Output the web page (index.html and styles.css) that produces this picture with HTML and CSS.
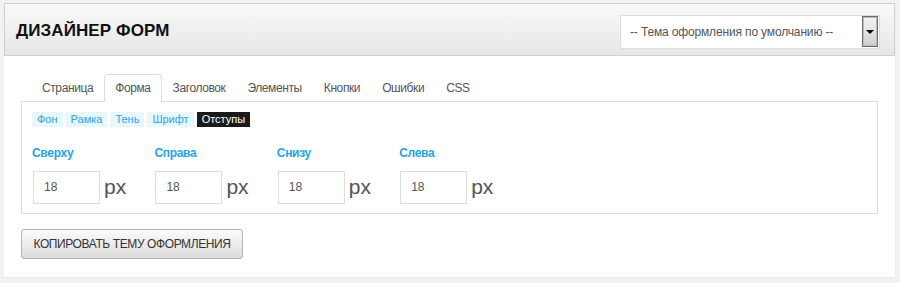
FILE: index.html
```html
<!DOCTYPE html>
<html lang="ru">
<head>
<meta charset="utf-8">
<title>Дизайнер форм</title>
<link rel="stylesheet" href="styles.css">
</head>
<body>
<div class="card">
  <div class="header">
    <h1 class="title">ДИЗАЙНЕР ФОРМ</h1>
    <div class="select">
      <span class="select-text">-- Тема оформления по умолчанию --</span>
      <span class="select-btn"><span class="arrow"></span></span>
    </div>
  </div>
  <div class="body">
    <ul class="tabs">
      <li class="tab">Страница</li>
      <li class="tab active">Форма</li>
      <li class="tab">Заголовок</li>
      <li class="tab">Элементы</li>
      <li class="tab">Кнопки</li>
      <li class="tab">Ошибки</li>
      <li class="tab">CSS</li>
    </ul>
    <div class="panel">
      <div class="subtabs">
        <span class="subtab">Фон</span>
        <span class="subtab">Рамка</span>
        <span class="subtab">Тень</span>
        <span class="subtab">Шрифт</span>
        <span class="subtab current">Отступы</span>
      </div>
      <div class="fields">
        <div class="field">
          <div class="label">Сверху</div>
          <div class="row"><span class="input">18</span><span class="unit">px</span></div>
        </div>
        <div class="field">
          <div class="label">Справа</div>
          <div class="row"><span class="input">18</span><span class="unit">px</span></div>
        </div>
        <div class="field">
          <div class="label">Снизу</div>
          <div class="row"><span class="input">18</span><span class="unit">px</span></div>
        </div>
        <div class="field">
          <div class="label">Слева</div>
          <div class="row"><span class="input">18</span><span class="unit">px</span></div>
        </div>
      </div>
    </div>
    <button class="btn">КОПИРОВАТЬ ТЕМУ ОФОРМЛЕНИЯ</button>
  </div>
</div>
</body>
</html>
```
FILE: styles.css
```css
html, body {
  margin: 0;
  padding: 0;
}
body {
  background: #f2f2f2;
  font-family: "Liberation Sans", Arial, sans-serif;
  padding: 3px 5px 7px 4px;
}
.card {
  background: #fff;
  box-shadow: 0 1px 2px rgba(0,0,0,0.04);
}
.header {
  height: 51px;
  border: 1px solid #cfcfcf;
  background: linear-gradient(#f9f9f9, #e6e6e6);
  display: flex;
  align-items: center;
  justify-content: space-between;
  padding: 0 14px 0 11px;
}
.title {
  margin: 0;
  font-size: 17px;
  font-weight: bold;
  color: #111;
  letter-spacing: 0.1px;
  position: relative;
  top: 1px;
}
.select {
  width: 258px;
  height: 32px;
  border: 1px solid #dcdcdc;
  background: #fff;
  display: flex;
  align-items: center;
  justify-content: space-between;
  margin-top: 4px;
}
.select-text {
  font-size: 12px;
  color: #555;
  padding-left: 9px;
  letter-spacing: -0.15px;
}
.select-btn {
  width: 14px;
  height: 29px;
  border: 1px solid #6c6c6c;
  box-shadow: inset 0 0 0 1px #bbb;
  background: linear-gradient(#f4f4f4, #cfcfcf);
  display: flex;
  align-items: center;
  justify-content: center;
  margin-right: 1px;
}
.arrow {
  width: 0;
  height: 0;
  border-left: 4px solid transparent;
  border-right: 4px solid transparent;
  border-top: 4px solid #000;
}
.body {
  padding: 18px 17px 18px 17px;
}
.tabs {
  list-style: none;
  margin: 0 0 0 10px;
  padding: 0;
  display: flex;
  position: relative;
  z-index: 1;
}
.tab {
  font-size: 12px;
  line-height: 14px;
  letter-spacing: -0.4px;
  color: #555;
  padding: 6px 10px 6px;
  border: 1px solid transparent;
  border-bottom: none;
  border-radius: 4px 4px 0 0;
  margin-bottom: -1px;
}
.tab.active {
  border-color: #dcdcdc;
  background: #fff;
  padding-bottom: 7px;
}
.panel {
  border: 1px solid #dcdcdc;
  padding: 10px 10px 9px;
}
.subtabs {
  display: flex;
  gap: 3px;
}
.subtab {
  font-size: 11px;
  line-height: 15px;
  padding: 0 5px;
  background: #e8f6fd;
  color: #2aa6e4;
}
.subtab.current {
  background: #1a1a1a;
  color: #fff;
}
.fields {
  display: flex;
  margin-top: 18px;
}
.field {
  width: 122.4px;
}
.label {
  font-size: 12px;
  font-weight: bold;
  letter-spacing: -0.3px;
  color: #23a5e6;
  line-height: 16px;
}
.row {
  display: flex;
  align-items: center;
  margin-top: 10px;
  margin-left: 1px;
}
.input {
  width: 55px;
  height: 31px;
  border: 1px solid #dcdcdc;
  font-size: 12px;
  color: #555;
  line-height: 31px;
  padding-left: 10px;
}
.unit {
  font-size: 21px;
  color: #555;
  margin-left: 4px;
  position: relative;
  top: -1px;
}
.btn {
  margin-top: 15px;
  width: 222px;
  height: 30px;
  border: 1px solid #b3b3b3;
  border-radius: 3px;
  background: linear-gradient(#fbfbfb, #dcdcdc);
  font-family: "Liberation Sans", Arial, sans-serif;
  font-size: 12px;
  letter-spacing: -0.4px;
  color: #333;
  padding: 0;
  display: block;
}
```
